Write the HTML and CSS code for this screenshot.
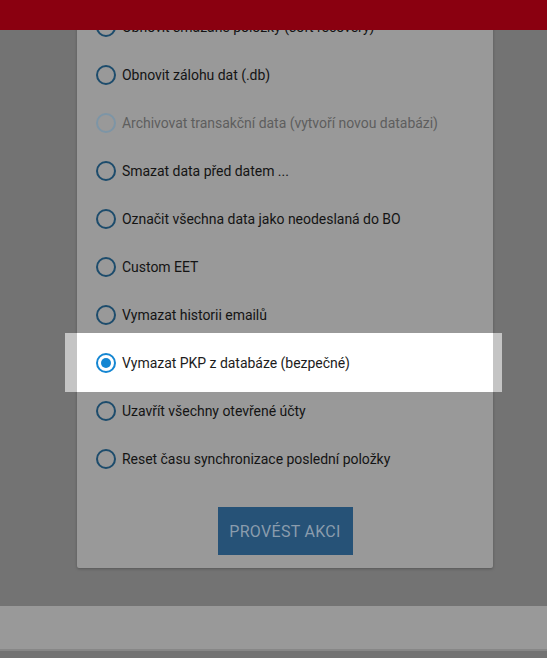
FILE: index.html
```html
<!DOCTYPE html>
<html lang="cs">
<head>
  <meta charset="UTF-8" />
  <meta name="viewport" content="width=device-width, initial-scale=1.0"/>
  <title>Servisní akce</title>
  <link rel="stylesheet" href="styles.css">
</head>
<body>

  <div class="topbar"></div>

  <div class="dialog">
    <label class="option"><span class="radio"></span>Obnovit smazané položky (soft recovery)</label>
    <label class="option"><span class="radio"></span>Obnovit zálohu dat (.db)</label>
    <label class="option disabled"><span class="radio"></span>Archivovat transakční data (vytvoří novou databázi)</label>
    <label class="option"><span class="radio"></span>Smazat data před datem ...</label>
    <label class="option"><span class="radio"></span>Označit všechna data jako neodeslaná do BO</label>
    <label class="option"><span class="radio"></span>Custom EET</label>
    <label class="option"><span class="radio"></span>Vymazat historii emailů</label>
    <label class="option selected"><span class="radio"></span>Vymazat PKP z databáze (bezpečné)</label>
    <label class="option"><span class="radio"></span>Uzavřít všechny otevřené účty</label>
    <label class="option"><span class="radio"></span>Reset času synchronizace poslední položky</label>

    <div class="actions">
      <button type="button">Provést akci</button>
    </div>
  </div>

  <div class="bottombar"></div>

</body>
</html>
```

FILE: styles.css
```css
body {
  margin: 0;
  height: 658px;
  overflow: hidden;
  background: #737373;
  font-family: Roboto, "Noto Sans", sans-serif;
}

.topbar {
  position: fixed;
  top: 0;
  left: 0;
  right: 0;
  height: 30px;
  background: #8a0010;
  z-index: 5;
}

.dialog {
  width: 416px;
  margin-left: 77px;
  padding: 3px 0 13px;
  background: #999999;
  border-radius: 0 0 2px 2px;
  box-shadow: 0 1px 3px rgba(0,0,0,0.25);
}

.option {
  position: relative;
  display: flex;
  align-items: center;
  height: 48px;
  padding-left: 19px;
  font-size: 14px;
  letter-spacing: -0.03px;
  color: #141414;
}

.option.disabled {
  color: #5e5e5e;
}

/* spotlight on the chosen row */
.option.selected {
  isolation: isolate;
  color: #1c1c1c;
}

.option.selected::before {
  content: "";
  position: absolute;
  top: -6px;
  bottom: -5px;
  left: -12px;
  right: -9px;
  z-index: -1;
  background: #fff;
  border-left: 12px solid #c4c4c4;
  border-right: 9px solid #c4c4c4;
  box-sizing: border-box;
}

.radio {
  position: relative;
  width: 20px;
  height: 20px;
  margin-right: 6px;
  border: 2px solid #1d4c6c;
  border-radius: 50%;
  box-sizing: border-box;
  flex-shrink: 0;
}

.option.disabled .radio {
  border-color: #7d95a6;
}

.option.selected .radio {
  border-color: #1486d2;
}

.option.selected .radio::after {
  content: "";
  position: absolute;
  top: 3px;
  left: 3px;
  width: 10px;
  height: 10px;
  border-radius: 50%;
  background: #1486d2;
}

.actions {
  display: flex;
  justify-content: center;
  margin-top: 24px;
}

button {
  width: 135px;
  height: 48px;
  border: none;
  background: #265277;
  color: #8a9cad;
  font-family: Roboto, sans-serif;
  font-size: 16px;
  letter-spacing: 0.3px;
  text-transform: uppercase;
}

.bottombar {
  margin-top: 38px;
  height: 43px;
  background: #999999;
  border-bottom: 2px solid #878787;
}
```
